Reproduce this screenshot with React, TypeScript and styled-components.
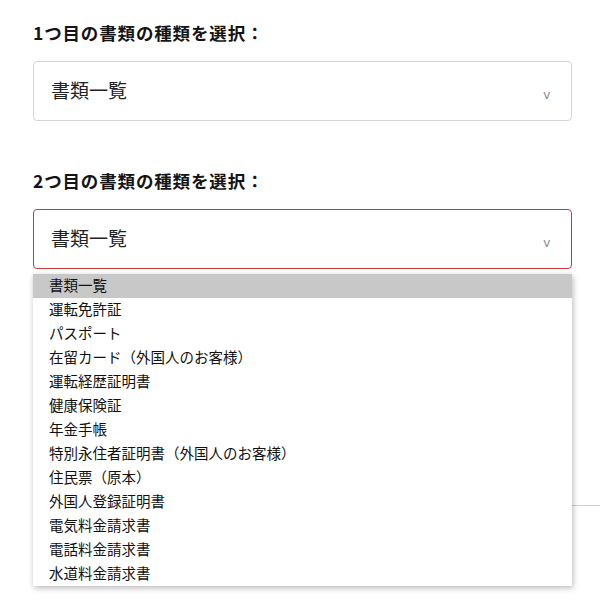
import React from "react";
import styled, { createGlobalStyle } from "styled-components";

const Global = createGlobalStyle`
  html, body { margin: 0; padding: 0; background: #fff; }
  body {
    font-family: "Noto Sans CJK JP", "Noto Sans", sans-serif;
    color: #222;
  }
`;

const Page = styled.div`
  position: relative;
  width: 600px;
  height: 604px;
  overflow: hidden;
  box-sizing: border-box;
  padding: 22px 28px 0 33px;
`;

const Section = styled.div<{ $gap?: number }>`
  display: flex;
  flex-direction: column;
  margin-top: ${(p) => p.$gap ?? 0}px;
`;

const Label = styled.div`
  height: 24px;
  line-height: 22px;
  font-size: 17.5px;
  font-weight: 700;
  letter-spacing: 0.85px;
  color: #151515;
  margin-bottom: 15px;
  white-space: nowrap;
`;

const SelectBox = styled.div<{ $active?: boolean }>`
  position: relative;
  box-sizing: border-box;
  width: 539px;
  height: 60px;
  border: 1px solid ${(p) => (p.$active ? "#c63a3a" : "#d4d4d4")};
  border-radius: 4px;
  display: flex;
  align-items: center;
  justify-content: space-between;
  padding: 0 21px 0 17px;
  background: #fff;
`;

const Value = styled.span`
  font-size: 19px;
  line-height: 24px;
  margin-bottom: 3px;
  color: #222;
`;

const Arrow = styled.span`
  font-family: "Noto Sans", sans-serif;
  font-size: 13px;
  color: #8a8a8a;
  margin-top: 6px;
`;

const Divider = styled.div`
  position: absolute;
  left: 33px;
  right: 0;
  top: 505px;
  height: 1px;
  background: #cfcfcf;
`;

const Dropdown = styled.ul`
  position: absolute;
  left: 33px;
  top: 274px;
  width: 539px;
  margin: 0;
  padding: 0;
  list-style: none;
  background: #fff;
  box-shadow: 1px 2px 6px rgba(0, 0, 0, 0.28);
  z-index: 2;
`;

const Option = styled.li<{ $selected?: boolean }>`
  box-sizing: border-box;
  height: 24px;
  line-height: 21px;
  padding-left: 16px;
  font-size: 14.5px;
  color: #111;
  background: ${(p) => (p.$selected ? "#c8c8c8" : "#fff")};
  white-space: nowrap;
`;

const options = [
  "書類一覧",
  "運転免許証",
  "パスポート",
  "在留カード（外国人のお客様）",
  "運転経歴証明書",
  "健康保険証",
  "年金手帳",
  "特別永住者証明書（外国人のお客様）",
  "住民票（原本）",
  "外国人登録証明書",
  "電気料金請求書",
  "電話料金請求書",
  "水道料金請求書",
];

export default function App() {
  return (
    <>
      <Global />
      <Page>
        <Section>
          <Label>1つ目の書類の種類を選択：</Label>
          <SelectBox>
            <Value>書類一覧</Value>
            <Arrow>v</Arrow>
          </SelectBox>
        </Section>
        <Section $gap={49}>
          <Label>2つ目の書類の種類を選択：</Label>
          <SelectBox $active>
            <Value>書類一覧</Value>
            <Arrow>v</Arrow>
          </SelectBox>
        </Section>
        <Divider />
        <Dropdown>
          {options.map((o, i) => (
            <Option key={o} $selected={i === 0}>
              {o}
            </Option>
          ))}
        </Dropdown>
      </Page>
    </>
  );
}
